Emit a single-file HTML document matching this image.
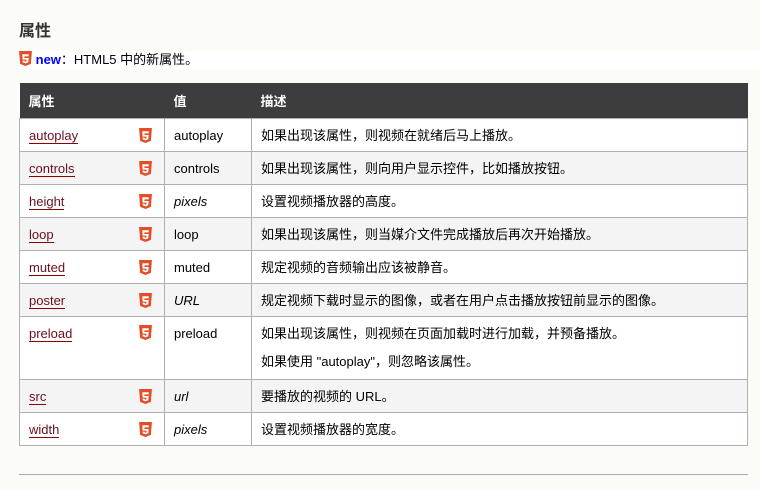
<!DOCTYPE html><html><head><meta charset="utf-8"><style>
body{margin:0;background:#fbfbf8;font-family:"Liberation Sans","Noto Sans CJK SC",sans-serif;font-size:13px;color:#000;width:760px;height:490px;overflow:hidden;position:relative}
h2{position:absolute;left:19px;top:17px;margin:0;font-size:16px;font-weight:bold;color:#333}
.new{position:absolute;left:19px;top:51px;width:741px;height:18px;background:#fff;line-height:18px;font-size:13px}
.new b{color:#00f}
table{position:absolute;left:19px;top:83px;width:729px;border-collapse:collapse;background:#fff}
th{background:#3d3d3d;color:#fff;text-align:left;height:35px;padding:0 9px;font-size:13px}
td{border:1px solid #b0b0b0;height:31px;padding:1px 9px 0;vertical-align:middle;font-size:13px;line-height:18px}
tr:nth-child(odd) td{background:#f4f4f4}
td.a{position:relative}
td a{text-decoration:none;border-bottom:1px solid #8b0000;color:#6b0f1f}
.ic{position:absolute;left:119px;top:9px}
.ml td{height:auto;vertical-align:top;padding-top:8px;padding-bottom:8px}
.ml .ic{top:8px}
i{font-style:italic}
hr{position:absolute;left:19px;top:474px;width:729px;margin:0;border:0;border-top:1px solid #aaa}
</style></head><body>
<h2>属性</h2>
<div class="new"><svg width="13" height="15" viewBox="0 0 12 14" style="vertical-align:-2px"><path d="M0 0h12l-1 12-5 2-5-2z" fill="#e44d26"/><path d="M3 3h6v2H5v1.5h4l-.4 4L6 11.5 3.4 10.5 3.3 9h1.8l.1.6 .8.3 .9-.3.1-1.6H3.3z" fill="#fff"/></svg> <b>new</b>：HTML5 中的新属性。</div>
<table>
<colgroup><col style="width:145px"><col style="width:87px"><col></colgroup>
<tr><th>属性</th><th>值</th><th>描述</th></tr>
<tr><td class="a"><a>autoplay</a><span class="ic">H</span></td><td>autoplay</td><td>如果出现该属性，则视频在就绪后马上播放。</td></tr>
<tr><td class="a"><a>controls</a><span class="ic">H</span></td><td>controls</td><td>如果出现该属性，则向用户显示控件，比如播放按钮。</td></tr>
<tr><td class="a"><a>height</a><span class="ic">H</span></td><td><i>pixels</i></td><td>设置视频播放器的高度。</td></tr>
<tr><td class="a"><a>loop</a><span class="ic">H</span></td><td>loop</td><td>如果出现该属性，则当媒介文件完成播放后再次开始播放。</td></tr>
<tr><td class="a"><a>muted</a><span class="ic">H</span></td><td>muted</td><td>规定视频的音频输出应该被静音。</td></tr>
<tr><td class="a"><a>poster</a><span class="ic">H</span></td><td><i>URL</i></td><td>规定视频下载时显示的图像，或者在用户点击播放按钮前显示的图像。</td></tr>
<tr class="ml"><td class="a"><a>preload</a><span class="ic">H</span></td><td>preload</td><td>如果出现该属性，则视频在页面加载时进行加载，并预备播放。<div style="margin-top:10px">如果使用 "autoplay"，则忽略该属性。</div></td></tr>
<tr><td class="a"><a>src</a><span class="ic">H</span></td><td><i>url</i></td><td>要播放的视频的 URL。</td></tr>
<tr><td class="a"><a>width</a><span class="ic">H</span></td><td><i>pixels</i></td><td>设置视频播放器的宽度。</td></tr>
</table>
<hr>
<script>
document.querySelectorAll('.ic').forEach(function(e){e.innerHTML='<svg width="13" height="15" viewBox="0 0 12 14"><path d="M0 0h12l-1 12-5 2-5-2z" fill="#e44d26"/><path d="M3 3h6v2H5v1.5h4l-.4 4L6 11.5 3.4 10.5 3.3 9h1.8l.1.6 .8.3 .9-.3.1-1.6H3.3z" fill="#fff"/></svg>';});
</script>
</body></html>
